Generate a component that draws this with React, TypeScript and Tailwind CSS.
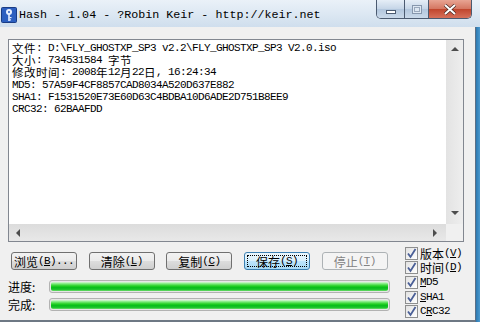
import React from "react";

const lines = [
  "文件: D:\\FLY_GHOSTXP_SP3 v2.2\\FLY_GHOSTXP_SP3 V2.0.iso",
  "大小: 734531584 字节",
  "修改时间: 2008年12月22日, 16:24:34",
  "MD5: 57A59F4CF8857CAD8034A520D637E882",
  "SHA1: F1531520E73E60D63C4BDBA10D6ADE2D751B8EE9",
  "CRC32: 62BAAFDD",
];

// split a line into CJK / half-width runs so each keeps the 12px / 6px grid
const Mixed = ({ text }: { text: string }) => {
  const parts = text.split(/([\u3000-\u9fff\uff00-\uffef]+)/).filter((p) => p.length > 0);
  return (
    <>
      {parts.map((p, i) =>
        /[\u3000-\u9fff\uff00-\uffef]/.test(p) ? (
          <span key={i} className="inline-block h-[12px] font-['Noto_Sans_CJK_SC',sans-serif] text-[11.5px] leading-[12px] tracking-[0.5px]">
            {p}
          </span>
        ) : (
          <span key={i} className="inline-block h-[12px] font-['Liberation_Mono',monospace] text-[11px] leading-[12px] tracking-[-0.6px] whitespace-pre">
            {p}
          </span>
        )
      )}
    </>
  );
};

const Accel = ({ label, k, tail }: { label: string; k: string; tail?: string }) => (
  <span className="flex items-center whitespace-pre leading-[13px]">
    <span className="font-['Noto_Sans_CJK_SC',sans-serif] text-[12px] leading-[13px]">{label}</span>
    <span className="font-['Liberation_Mono',monospace] text-[11px] leading-[13px] tracking-[-0.6px]">
      (<span className="underline">{k}</span>){tail}
    </span>
  </span>
);

const Button = ({
  children,
  focused,
  disabled,
}: {
  children: React.ReactNode;
  focused?: boolean;
  disabled?: boolean;
}) => {
  if (disabled) {
    return (
      <div className="w-[66px] h-[18px] rounded-[3px] border border-[#adb2b5] bg-[#f4f4f4] text-[#838383] flex items-center justify-center">
        {children}
      </div>
    );
  }
  if (focused) {
    return (
      <div className="w-[66px] h-[18px] rounded-[3px] border border-[#3c7fb1] bg-[linear-gradient(to_bottom,#eaf6fd_0%,#d9f0fc_50%,#bee6fd_51%,#a7d9f5_100%)] p-[2px]">
        <div className="w-full h-full border border-dotted border-black flex items-center justify-center text-black">
          {children}
        </div>
      </div>
    );
  }
  return (
    <div className="w-[66px] h-[18px] rounded-[3px] border border-[#707070] bg-[linear-gradient(to_bottom,#f2f2f2_0%,#ebebeb_50%,#dddddd_51%,#cfcfcf_100%)] text-black flex items-center justify-center">
      {children}
    </div>
  );
};

const Bar = () => (
  <div className="w-[341px] h-[13px] rounded-[3px] border border-[#b2b2b2] bg-[#e6e6e6] p-px">
    <div className="w-full h-full rounded-[2px] bg-[linear-gradient(to_bottom,#d8f7d8_0%,#74e874_22%,#22d022_45%,#08bd1c_62%,#18c428_82%,#6fdc6f_100%)]" />
  </div>
);

const Check = ({ children }: { children: React.ReactNode }) => (
  <div className="h-[14.6px] flex items-center gap-[2px]">
    <div className="w-[13px] h-[13px] border border-[#8e8f8f] bg-[linear-gradient(135deg,#e2e2e2,#ffffff)] flex items-center justify-center">
      <svg width="11" height="11" viewBox="0 0 11 11">
        <path d="M2 5.5 L4.5 9 L9.5 1" fill="none" stroke="#4a5f97" strokeWidth="1.8" />
      </svg>
    </div>
    {children}
  </div>
);

const Tri = ({ dir }: { dir: "up" | "down" | "left" | "right" }) => {
  const d = {
    up: "M0 5 L4 1 L8 5 Z",
    down: "M0 1 L8 1 L4 5 Z",
    left: "M5 0 L5 8 L1 4 Z",
    right: "M1 0 L1 8 L5 4 Z",
  }[dir];
  return (
    <svg width="8" height="8" viewBox="0 0 8 8">
      <path d={d} fill="#4d4d4d" />
    </svg>
  );
};

export default function App() {
  return (
    <div className="w-[480px] h-[322px] overflow-hidden flex flex-col bg-[#c9dcef]">
      {/* title bar */}
      <div className="h-[27px] flex items-start bg-[linear-gradient(to_bottom,#eaf1f8_0%,#dde8f3_50%,#cfdeed_100%)]">
        <svg width="16" height="16" viewBox="0 0 16 16" className="mt-[7px] ml-[1px]">
          <rect x="0.5" y="0.5" width="15" height="15" rx="1" fill="#2c5fc0" stroke="#1a3c85" />
          <circle cx="8" cy="5" r="3" fill="#e8f0ff" />
          <circle cx="8" cy="5" r="1" fill="#2c5fc0" />
          <rect x="7.2" y="7" width="1.6" height="7" fill="#e8f0ff" />
          <rect x="8.5" y="10" width="2" height="1.2" fill="#e8f0ff" />
          <rect x="8.5" y="12.3" width="1.5" height="1.2" fill="#e8f0ff" />
        </svg>
        <div className="ml-[2px] mt-[6px] font-['Liberation_Mono',monospace] text-[11.7px] leading-[18px] text-black whitespace-pre">
          Hash - 1.04 - ?Robin Keir - http://keir.net
        </div>
        <div className="ml-auto mr-[8px] flex h-[19px] rounded-b-[5px] border border-t-0 border-[#4b5a70] overflow-hidden">
          <div className="w-[28px] h-full border-r border-[#4b5a70] bg-[linear-gradient(to_bottom,#e6eef7,#c5d5e7_50%,#b2c6dd_51%,#cad9ea)] flex items-center justify-center">
            <div className="w-[10px] h-[4px] mt-[5px] bg-white border border-[#4b5a70]" />
          </div>
          <div className="w-[24px] h-full border-r border-[#4b5a70] bg-[linear-gradient(to_bottom,#e6eef7,#c5d5e7_50%,#b2c6dd_51%,#cad9ea)] flex items-center justify-center">
            <div className="w-[10px] h-[9px] border border-[#8797ad] bg-[#dde7f2] p-[1px]">
              <div className="w-full h-full border border-[#9aa9bd]" />
            </div>
          </div>
          <div className="w-[42px] h-full bg-[linear-gradient(to_bottom,#e8a493,#d47560_50%,#c0452d_51%,#d6705a)] flex items-center justify-center">
            <svg width="14" height="11" viewBox="0 0 14 11">
              <path d="M2 1 L12 10 M12 1 L2 10" stroke="#4a2a24" strokeWidth="3.4" />
              <path d="M2 1 L12 10 M12 1 L2 10" stroke="#ffffff" strokeWidth="2" />
            </svg>
          </div>
        </div>
      </div>

      <div className="flex flex-1">
        {/* client area */}
        <div className="flex-1 bg-[#f0f0f0] flex flex-col pl-[8px] pt-[12px] border-b-2 border-[#6e7884]">
          {/* text box */}
          <div className="w-[456px] h-[203px] border border-[#828790] bg-white flex flex-col">
            <div className="flex flex-1 min-h-0">
              <div className="flex-1 pl-[3px] pt-[2px] text-black">
                {lines.map((l, i) => (
                  <div key={i} className="h-[12.2px] flex items-center whitespace-pre">
                    <Mixed text={l} />
                  </div>
                ))}
              </div>
              <div className="w-[17px] bg-[linear-gradient(to_right,#e3e3e3,#eeeeee)] flex flex-col items-center justify-between py-[6px]">
                <Tri dir="up" />
                <Tri dir="down" />
              </div>
            </div>
            <div className="h-[17px] flex">
              <div className="flex-1 bg-[linear-gradient(to_bottom,#dcdcdc,#e8e8e8)] flex items-center justify-between px-[6px]">
                <Tri dir="left" />
                <Tri dir="right" />
              </div>
              <div className="w-[17px] bg-[#f0f0f0]" />
            </div>
          </div>

          <div className="flex">
            <div className="flex flex-col">
              {/* buttons */}
              <div className="mt-[10px] ml-[3px] flex gap-[11.7px]">
                <Button>
                  <Accel label="浏览" k="B" tail="..." />
                </Button>
                <Button>
                  <Accel label="清除" k="L" />
                </Button>
                <Button>
                  <Accel label="复制" k="C" />
                </Button>
                <Button focused>
                  <Accel label="保存" k="S" />
                </Button>
                <Button disabled>
                  <Accel label="停止" k="T" />
                </Button>
              </div>
              {/* progress */}
              <div className="mt-[10px] flex items-center h-[13px]">
                <div className="w-[41px] font-['Noto_Sans_CJK_SC',sans-serif] text-[12px] leading-[13px] text-black">进度:</div>
                <Bar />
              </div>
              <div className="mt-[5px] flex items-center h-[13px]">
                <div className="w-[41px] font-['Noto_Sans_CJK_SC',sans-serif] text-[12px] leading-[13px] text-black">完成:</div>
                <Bar />
              </div>
            </div>

            {/* checkboxes */}
            <div className="ml-[15px] mt-[4px] flex flex-col text-black">
              <Check>
                <Accel label="版本" k="V" />
              </Check>
              <Check>
                <Accel label="时间" k="D" />
              </Check>
              <Check>
                <span className="font-['Liberation_Mono',monospace] text-[11px] leading-[13px] tracking-[-0.6px]">
                  <span className="underline">M</span>D5
                </span>
              </Check>
              <Check>
                <span className="font-['Liberation_Mono',monospace] text-[11px] leading-[13px] tracking-[-0.6px]">
                  <span className="underline">S</span>HA1
                </span>
              </Check>
              <Check>
                <span className="font-['Liberation_Mono',monospace] text-[11px] leading-[13px] tracking-[-0.6px]">
                  C<span className="underline">R</span>C32
                </span>
              </Check>
            </div>
          </div>
        </div>
        {/* right frame */}
        <div className="w-[5px] border-l border-[#5b6f86] bg-[linear-gradient(to_right,#2d79b0,#4c9ad0)]" />
      </div>
    </div>
  );
}
